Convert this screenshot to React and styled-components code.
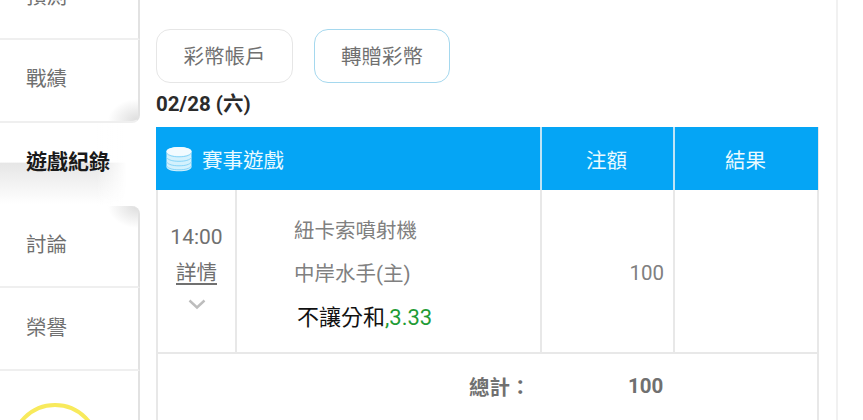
import styled, { createGlobalStyle } from "styled-components";

const GlobalStyle = createGlobalStyle`
    html, body {
        margin: 0;
        height: 100%;
        overflow: hidden;
        background: #fff;
    }
    body {
        font-family: "Roboto", "Noto Sans CJK TC", sans-serif;
    }
`

const menu = [
    { label: "預測" },
    { label: "戰績", corner: "bottom" },
    { label: "遊戲紀錄", active: true },
    { label: "討論", corner: "top" },
    { label: "榮譽" },
]

const DbIcon = () => (
    <svg width="26" height="26" viewBox="0 0 26 26">
        <path d="M0.500 5.500C0.500 2.700 6.100 1 13 1s12.500 1.700 12.500 4.500v15.500c0 2.800-5.600 4.300-12.500 4.300S0.500 23.800 0.500 21z" fill="#d3f1fd" />
        <ellipse cx="13" cy="5.500" rx="12.500" ry="4.500" fill="#f2fbff" />
        <path d="M0.500 7c1.800 2.600 6.500 3.800 12.500 3.800s10.700-1.200 12.500-3.800M0.500 11.500c1.800 2.600 6.500 3.800 12.500 3.800s10.700-1.200 12.500-3.800M0.500 16c1.800 2.600 6.500 3.800 12.500 3.800s10.700-1.200 12.500-3.800M0.500 20c1.800 2.600 6.500 3.800 12.500 3.800s10.700-1.200 12.500-3.800" fill="none" stroke="#86d5f9" strokeWidth="1" />
    </svg>
)

const Chevron = () => (
    <svg width="18" height="11" viewBox="0 0 18 11">
        <path d="M1.500 1.500L9 8.500l7.500-7" fill="none" stroke="#bdbdbd" strokeWidth="2.400" />
    </svg>
)

export default function App() {
    return (
        <>
            <GlobalStyle />
            <Page>
                <Sidebar>
                    {menu.map((item) => (
                        <MenuItem key={item.label} $active={item.active} $corner={item.corner}>{item.label}</MenuItem>
                    ))}
                    <AvatarSlot>
                        <Avatar />
                    </AvatarSlot>
                </Sidebar>
                <Content>
                    <Tabs>
                        <Tab>彩幣帳戶</Tab>
                        <Tab $selected>轉贈彩幣</Tab>
                    </Tabs>
                    <DateLabel>02/28 (六)</DateLabel>
                    <Table>
                        <HeadRow>
                            <HeadTitle><DbIcon />賽事遊戲</HeadTitle>
                            <HeadCell>注額</HeadCell>
                            <HeadCell>結果</HeadCell>
                        </HeadRow>
                        <BodyRow>
                            <TimeCell>
                                <span>14:00</span>
                                <Detail>詳情</Detail>
                                <Chevron />
                            </TimeCell>
                            <GameCell>
                                <Team>紐卡索噴射機</Team>
                                <Team>中岸水手(主)</Team>
                                <Pick>不讓分和<Odds>,3.33</Odds></Pick>
                            </GameCell>
                            <AmountCell>100</AmountCell>
                            <ResultCell />
                        </BodyRow>
                        <TotalRow>
                            <TotalLabel>總計：</TotalLabel>
                            <TotalValue>100</TotalValue>
                        </TotalRow>
                    </Table>
                </Content>
            </Page>
        </>
    )
}

const cornerShade = {
    bottom: `
        border-bottom-right-radius: 8px;
        background: radial-gradient(30px 22px at 100% 100%, #dcdcdc, #fff);
    `,
    top: `
        border-top-right-radius: 8px;
        background: radial-gradient(30px 22px at 100% 0, #dcdcdc, #fff);
    `,
}

const Page = styled.div`
    display: flex;
    align-items: flex-start;
    width: 836px;
    height: 420px;
    overflow: hidden;
    border-right: 2px solid #f1f1f1;
    box-sizing: content-box;
`

const Sidebar = styled.nav`
    flex: none;
    width: 140px;
    margin-top: -42.75px;
    height: 520px;
    display: flex;
    flex-direction: column;
`

const MenuItem = styled.div`
    flex: none;
    height: 82.75px;
    box-sizing: border-box;
    display: flex;
    align-items: center;
    padding: 0 0 6px 26px;
    font-size: ${(props) => props.$active ? "21px" : "20.5px"};
    color: ${(props) => props.$active ? "#1a1a1a" : "#707070"};
    font-weight: ${(props) => props.$active ? 700 : 400};
    border-right: 2px solid ${(props) => props.$active ? "#fff" : "#e2e2e2"};
    border-bottom: 2px solid ${(props) => props.$active ? "transparent" : "#efefef"};
    background: ${(props) => props.$active
        ? "linear-gradient(to right, transparent 70%, #fff 92%), linear-gradient(#fff 0 48%, #e6e6e6 50%, #fff 100%)"
        : "#fff"};
    ${(props) => props.$corner ? cornerShade[props.$corner] : ""}
`

const AvatarSlot = styled.div`
    flex: 1;
    padding: 32px 0 0 10px;
    border-right: 2px solid #e2e2e2;
`

const Avatar = styled.div`
    width: 90px;
    height: 90px;
    box-sizing: border-box;
    border: 4px solid #f8ea5c;
    border-radius: 50%;
`

const Content = styled.main`
    flex: 1;
    padding: 29px 18px 0 16px;
    min-width: 0;
`

const Tabs = styled.div`
    display: flex;
    gap: 21px;
`

const Tab = styled.div`
    width: ${(props) => props.$selected ? "136px" : "137px"};
    height: 54px;
    box-sizing: border-box;
    display: flex;
    align-items: center;
    justify-content: center;
    padding-bottom: 2px;
    font-size: 20.5px;
    color: #707070;
    background: #fff;
    border: 1px solid ${(props) => props.$selected ? "#a5d8ee" : "#e6e6e6"};
    border-radius: 14px;
`

const DateLabel = styled.div`
    margin-top: 9px;
    height: 35px;
    font-size: 20.5px;
    font-weight: 700;
    line-height: 24px;
    color: #2b2b2b;
`

const Table = styled.div`
    border-left: 2px solid #e8e8e8;
    border-right: 2px solid #e8e8e8;
    border-bottom: 2px solid #e8e8e8;
    width: 663px;
    box-sizing: border-box;
`

const HeadRow = styled.div`
    display: grid;
    grid-template-columns: 384px 133px 1fr;
    height: 63px;
    background: #05a5f5;
    color: #eafaff;
    font-size: 20.5px;
    margin: 0 -1px 0 -2px;
`

const HeadTitle = styled.div`
    display: flex;
    align-items: center;
    gap: 10px;
    padding-left: 10px;
`

const HeadCell = styled.div`
    display: flex;
    align-items: center;
    justify-content: center;
    padding-right: 2px;
    border-left: 2px solid #bfe4f6;
`

const BodyRow = styled.div`
    display: grid;
    grid-template-columns: 77px 305px 133px 1fr;
    height: 162px;
    border-bottom: 2px solid #e8e8e8;
    box-sizing: content-box;
`

const TimeCell = styled.div`
    display: flex;
    flex-direction: column;
    align-items: center;
    padding-top: 33px;
    font-size: 21px;
    color: #707070;
    line-height: 28px;
    svg {
        margin-top: 12px;
    }
`

const Detail = styled.span`
    margin-top: 8px;
    font-size: 20.5px;
    text-decoration: underline;
    text-underline-offset: 3px;
`

const GameCell = styled.div`
    border-left: 2px solid #e8e8e8;
    padding: 27px 0 0 57px;
    display: flex;
    flex-direction: column;
    gap: 14px;
    font-size: 20.5px;
    line-height: 29px;
`

const Team = styled.span`
    color: #808080;
`

const Pick = styled.span`
    color: #111;
    font-size: 22px;
    padding-left: 3px;
`

const Odds = styled.span`
    color: #1f9c36;
`

const AmountCell = styled.div`
    border-left: 2px solid #e8e8e8;
    display: flex;
    align-items: center;
    justify-content: flex-end;
    padding: 3px 9px 0 0;
    font-size: 20.5px;
    color: #808080;
`

const ResultCell = styled.div`
    border-left: 2px solid #e8e8e8;
`

const TotalRow = styled.div`
    display: flex;
    align-items: center;
    height: 66px;
    padding-bottom: 2px;
    box-sizing: border-box;
    font-size: 20.5px;
    font-weight: 700;
    color: #707070;
`

const TotalLabel = styled.span`
    margin-left: 311px;
    width: 159px;
`

const TotalValue = styled.span`
`
